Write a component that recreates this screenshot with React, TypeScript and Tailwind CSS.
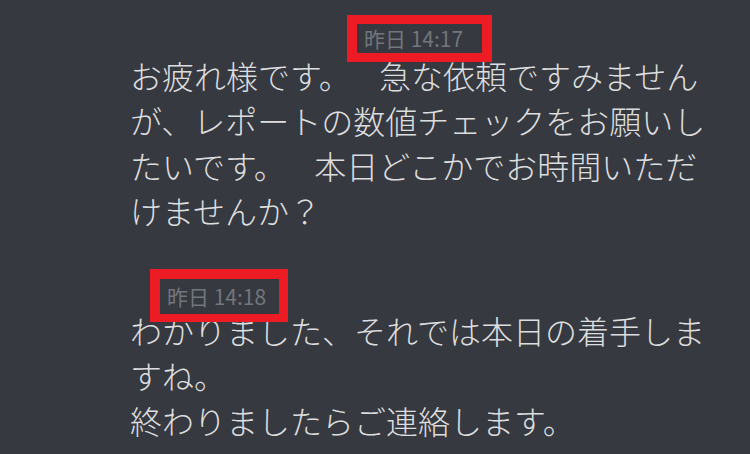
import React from 'react'

const jp = { fontFamily: '"Noto Sans CJK JP", "Noto Sans", sans-serif' }

// timestamp with the red annotation box drawn over it
const Stamp = ({ label, className, boxClass }: { label: string; className: string; boxClass: string }) => (
  <div className={`relative flex items-center text-[21px] font-normal text-[#72767d] ${className}`}>
    <span className="leading-none">{label}</span>
    <div className={`absolute border-[#ed1c24] pointer-events-none ${boxClass}`} />
  </div>
)

export default function App() {
  return (
    <div style={jp} className="w-[750px] h-[454px] bg-[#36393f] overflow-hidden font-light">
      <div className="pl-[130px] pt-[24px]">
        <Stamp
          label="昨日 14:17"
          className="ml-[227px] w-[125px] h-[29px] pl-[7px]"
          boxClass="-left-[10px] -right-[10px] -top-[9px] -bottom-[9px] border-x-[10px] border-y-[9px]"
        />
        <p className="w-[592px] text-[32px] leading-[45px] text-[#dcddde] whitespace-pre-wrap">
          お疲れ様です。{'    '}急な依頼ですみませんが、レポートの数値チェックをお願いしたいです。{'    '}本日どこかでお時間いただけませんか？
        </p>

        <Stamp
          label="昨日 14:18"
          className="mt-[46px] ml-[30px] w-[119px] h-[35px] pl-[7px]"
          boxClass="-left-[10px] -right-[9px] -top-[10px] -bottom-[8px] border-l-[10px] border-r-[9px] border-t-[10px] border-b-[8px]"
        />
        <p className="-mt-[6px] w-[592px] text-[32px] leading-[45px] text-[#dcddde]">
          わかりました、それでは本日の着手しますね。
          <br />
          終わりましたらご連絡します。
        </p>
      </div>
    </div>
  )
}
